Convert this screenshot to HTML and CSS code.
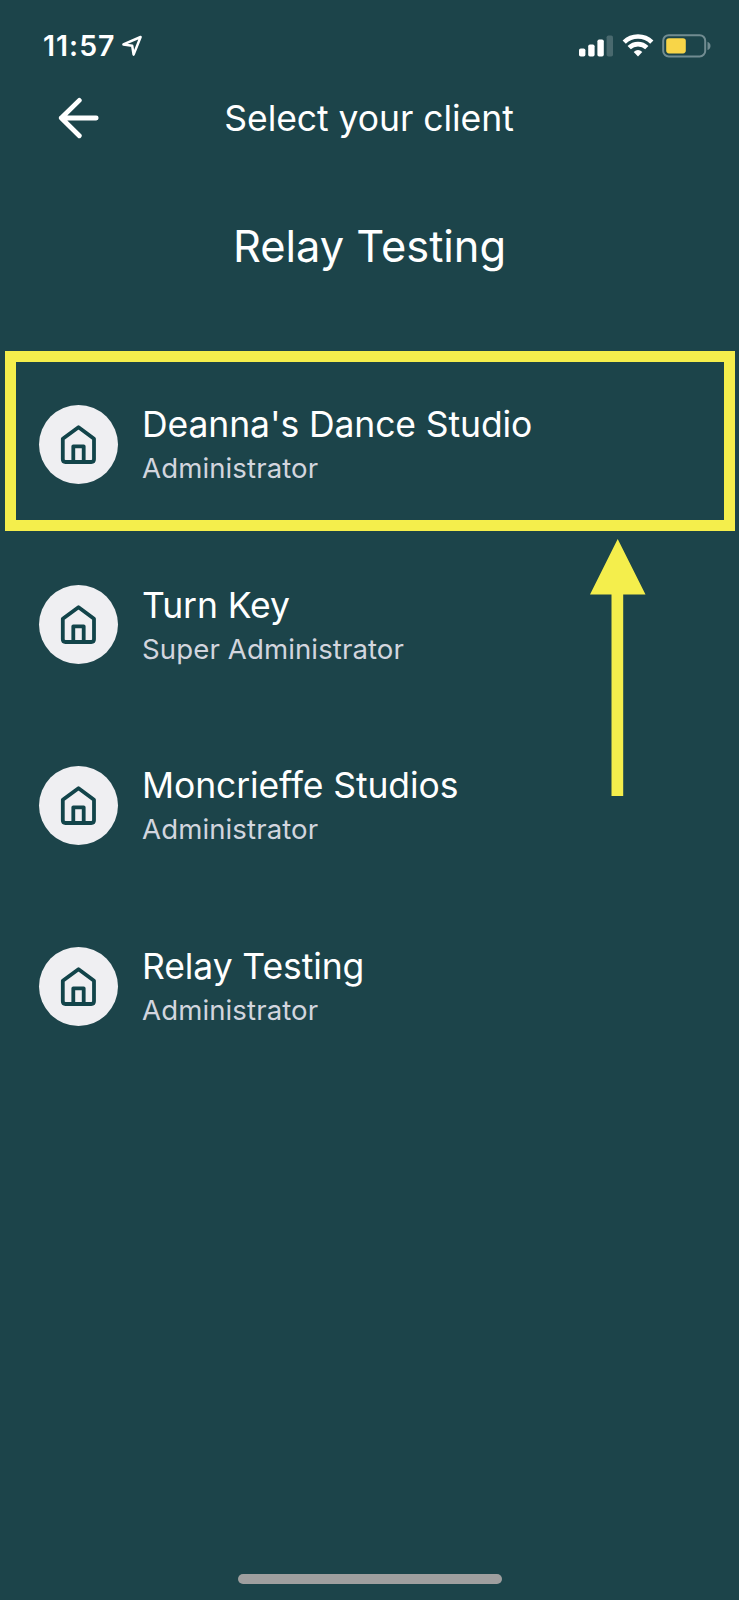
FILE: index.html
```html
<!doctype html>
<html lang="en">
<head>
    <meta charset="UTF-8">
    <title>Select your client</title>
    <link rel="stylesheet" href="styles.css">
</head>
<body>
    <!-- icon shared by all client rows -->
    <svg class="defs" width="0" height="0">
        <symbol id="house" viewBox="0 0 79 79">
            <path d="M23.8 33.8 L39.5 22.2 L55 33.8 V54.3 Q55 57 52.3 57 H26.5 Q23.8 57 23.8 54.3 Z M34.3 57 V41.3 H44.7 V57" fill="none" stroke="#12444a" stroke-width="3.8" stroke-linejoin="round"/>
        </symbol>
    </svg>

    <div class="screen">
        <div class="status-bar">
            <span class="time">11:57</span>
            <svg class="location" width="24" height="26" viewBox="0 0 24 26">
                <path d="M3.4 11.4 L20.6 4 L13.6 21.6 L12.2 12.8 Z" fill="none" stroke="#fff" stroke-width="2.5" stroke-linejoin="round"/>
            </svg>
            <svg class="signal" width="34" height="22" viewBox="0 0 34 22">
                <rect x="0" y="13.5" width="6.4" height="8" rx="1.8" fill="#fff"/>
                <rect x="9.2" y="9.5" width="6.4" height="12" rx="1.8" fill="#fff"/>
                <rect x="18.4" y="4.5" width="6.4" height="17" rx="1.8" fill="#fff"/>
                <rect x="27.6" y="0.5" width="6.4" height="21" rx="1.8" fill="#49696e"/>
            </svg>
            <svg class="wifi" width="32" height="23" viewBox="0 0 32 23">
                <g fill="none" stroke="#fff" stroke-width="4.6">
                    <path d="M2.2 8.2 A19.6 19.6 0 0 1 29.8 8.2"/>
                    <path d="M7.2 13.7 A12.5 12.5 0 0 1 24.8 13.7"/>
                </g>
                <path d="M16 22.5 L11.7 18 Q16 14.2 20.3 18 Z" fill="#fff"/>
            </svg>
            <svg class="battery" width="50" height="24" viewBox="0 0 50 24">
                <rect x="1.2" y="1.2" width="42" height="21.2" rx="5.5" fill="none" stroke="#718c91" stroke-width="2"/>
                <rect x="4.2" y="4.2" width="19.6" height="15.2" rx="2.8" fill="#f8d548"/>
                <path d="M45.5 7.8 Q48.5 9 48.5 11.9 Q48.5 14.8 45.5 16 Z" fill="#718c91"/>
            </svg>
        </div>

        <div class="header">
            <svg class="back" width="42" height="42" viewBox="0 0 42 42">
                <path d="M21.3 3.4 L3.3 21 L21.3 38.8 M3.3 21 H38.2" fill="none" stroke="#fff" stroke-width="4.8" stroke-linecap="round" stroke-linejoin="round"/>
            </svg>
            <div class="header-title">Select your client</div>
        </div>

        <h1 class="company">Relay Testing</h1>

        <div class="clients">
            <div class="client">
                <svg class="avatar"><use href="#house"/></svg>
                <div class="info">
                    <div class="name">Deanna's Dance Studio</div>
                    <div class="role">Administrator</div>
                </div>
            </div>
            <div class="client">
                <svg class="avatar"><use href="#house"/></svg>
                <div class="info">
                    <div class="name">Turn Key</div>
                    <div class="role">Super Administrator</div>
                </div>
            </div>
            <div class="client">
                <svg class="avatar"><use href="#house"/></svg>
                <div class="info">
                    <div class="name">Moncrieffe Studios</div>
                    <div class="role">Administrator</div>
                </div>
            </div>
            <div class="client">
                <svg class="avatar"><use href="#house"/></svg>
                <div class="info">
                    <div class="name">Relay Testing</div>
                    <div class="role">Administrator</div>
                </div>
            </div>

            <!-- highlight around the first client -->
            <div class="highlight"></div>
            <svg class="pointer" width="56" height="258" viewBox="0 0 56 258">
                <path d="M27.7 0 L55.5 55.5 H33.2 V257 H21.5 V55.5 H0 Z" fill="#f4ee4c"/>
            </svg>
        </div>

        <div class="home-indicator"></div>
    </div>
</body>
</html>
```

FILE: styles.css
```css
body {
    margin: 0;
    background-color: #1c444a;
    color: #fff;
    font-family: Inter, sans-serif;
    font-variant-ligatures: none;
}
.defs {
    display: block;
}
.screen {
    display: flex;
    flex-direction: column;
    width: 739px;
    height: 1600px;
}
.status-bar {
    display: flex;
    align-items: center;
    height: 91px;
    padding: 0 27px 0 43px;
    box-sizing: border-box;
}
.time {
    width: 73px;
    font-size: 28.5px;
    font-weight: 600;
    letter-spacing: 1px;
    white-space: nowrap;
}
.location {
    margin-left: 4px;
}
.signal {
    margin-left: auto;
}
.wifi {
    margin-left: 8.5px;
}
.battery {
    margin-left: 8.5px;
}
.header {
    display: flex;
    align-items: center;
    height: 54px;
    padding: 0 58px;
}
.header-title {
    flex: 1;
    margin-right: 43px;
    text-align: center;
    font-size: 35.5px;
    letter-spacing: -0.05px;
}
.company {
    margin: 0;
    font-size: 43.4px;
    font-weight: 400;
    line-height: 202px;
    text-align: center;
}
.clients {
    position: relative;
    margin-top: 7px;
}
.client {
    display: flex;
    align-items: center;
    height: 180.6px;
    padding-left: 39px;
}
.avatar {
    width: 79px;
    height: 79px;
    border-radius: 50%;
    background-color: #efeff2;
}
.info {
    padding-top: 5px;
    margin-left: 24px;
    white-space: nowrap;
}
.name {
    font-size: 35.5px;
    line-height: 44px;
    letter-spacing: -0.1px;
}
.role {
    color: #d2d5de;
    font-size: 27.6px;
    line-height: 43px;
    letter-spacing: 0.1px;
}
.highlight {
    position: absolute;
    top: -3px;
    left: 5px;
    width: 730px;
    height: 179.5px;
    box-sizing: border-box;
    border: 11.5px solid #f4ee4c;
}
.pointer {
    position: absolute;
    top: 185px;
    left: 590px;
}
.home-indicator {
    width: 264px;
    height: 10px;
    margin: auto auto 16px;
    border-radius: 5px;
    background-color: #9f9f9f;
}
```
